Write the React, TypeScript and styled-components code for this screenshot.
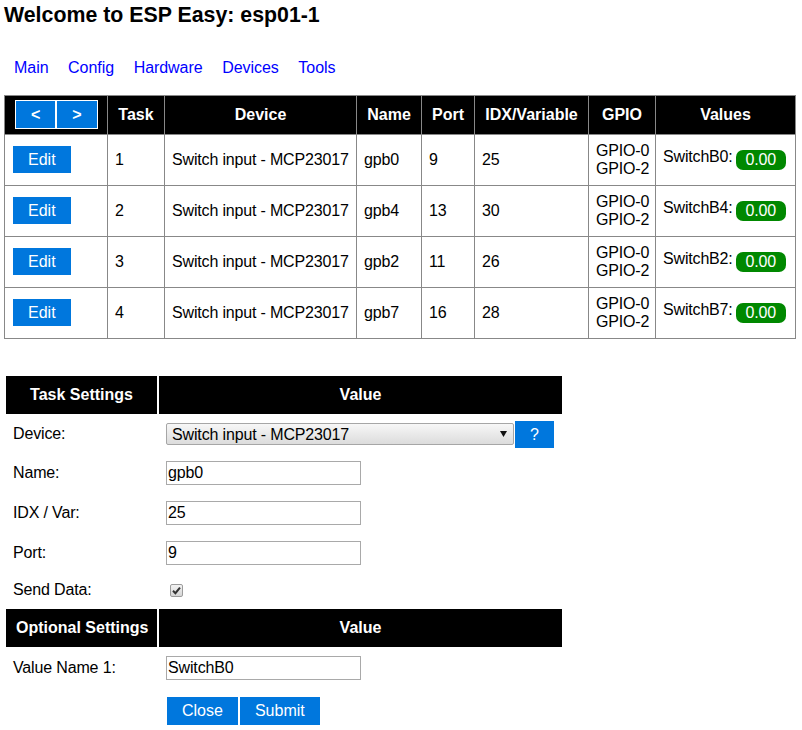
import React from 'react'
import styled, { createGlobalStyle } from 'styled-components'

const GlobalStyle = createGlobalStyle`
  html, body {
    overflow: hidden;
  }
  body {
    margin: 0;
    background: #fff;
    color: #000;
    font-family: "Liberation Sans", Arial, sans-serif;
    font-size: 16px;
  }
`

const Page = styled.div`
  padding: 3px 4px 0;
`

const Title = styled.h1`
  margin: 0;
  font-size: 21.33px;
  line-height: 24.5px;
  font-weight: bold;
`

const Menu = styled.nav`
  display: flex;
  gap: 19.6px;
  margin: 31px 0 0 10px;
  line-height: 18.4px;
  letter-spacing: -0.05px;
`

const MenuLink = styled.a`
  color: #0000ff;
  text-decoration: none;
`

const DeviceTable = styled.table`
  border-collapse: collapse;
  table-layout: fixed;
  width: 792px;
  margin-top: 18px;
`

const HeadCell = styled.th<{ $w?: number }>`
  ${p => (p.$w ? `width: ${p.$w}px;` : '')}
  padding: 10px;
  background: #000;
  color: #fff;
  font-weight: bold;
  text-align: center;
  white-space: nowrap;
  line-height: 18px;
  border: 1px solid #888;
`

const Cell = styled.td`
  padding: 7px;
  line-height: 18px;
  vertical-align: middle;
  border: 1px solid #888;
  white-space: nowrap;
  letter-spacing: -0.17px;
`

const LinkButton = styled.a`
  padding: 5px 15px;
  background: #0077dd;
  color: #fff;
  border: 1px solid #fff;
  text-decoration: none;
  font-weight: inherit;
  letter-spacing: 0;
`

const ValueBox = styled.div`
  display: flex;
  justify-content: space-between;
  align-items: flex-start;
`

const ValueName = styled.span`
  line-height: 18.4px;
`

const ValuePill = styled.span`
  margin: 2px;
  padding: 1px 10px;
  border-radius: 7px;
  background: #008800;
  color: #fff;
  line-height: 18px;
`

const SettingsTable = styled.table`
  border-collapse: separate;
  border-spacing: 2px;
  table-layout: fixed;
  width: 560px;
  margin-top: 35px;
`

const SettingsHead = styled.th<{ $w?: number }>`
  ${p => (p.$w ? `width: ${p.$w}px;` : '')}
  padding: 10px;
  background: #000;
  color: #fff;
  font-weight: bold;
  text-align: center;
  white-space: nowrap;
  line-height: 18.5px;
`

const SettingsCell = styled.td`
  padding: 7px;
  line-height: 18.4px;
  vertical-align: middle;
  white-space: nowrap;
  letter-spacing: -0.15px;
`

const FieldLine = styled.div`
  display: flex;
  align-items: center;
  height: 22px;
`

const SelectWrap = styled.div`
  position: relative;
  width: 348px;
  height: 22px;
`

const Select = styled.select`
  appearance: none;
  box-sizing: border-box;
  width: 100%;
  height: 22px;
  margin: 0;
  padding: 0 20px 0 5px;
  border: 1px solid #a6a6a6;
  border-radius: 2px;
  background: linear-gradient(#f7f7f7, #dcdcdc);
  color: #000;
  font-family: inherit;
  font-size: 16px;
  letter-spacing: -0.15px;
`

const SelectArrow = styled.svg`
  position: absolute;
  right: 7px;
  top: 8px;
  pointer-events: none;
`

const HelpButton = styled.a`
  display: inline-block;
  padding: 5px 15px;
  line-height: 17px;
  background: #0077dd;
  color: #fff;
  border: 1px solid #fff;
  text-decoration: none;
  letter-spacing: 0;
`

const TextInput = styled.input`
  box-sizing: border-box;
  width: 195px;
  height: 24px;
  margin: 0;
  padding: 1px;
  border: 1px solid #a9a9a9;
  font-family: inherit;
  font-size: 16px;
  color: #000;
  vertical-align: middle;
  letter-spacing: -0.15px;
`

const CheckLine = styled.div`
  display: flex;
  align-items: center;
  height: 18.4px;
`

const CheckBox = styled.span`
  box-sizing: border-box;
  display: flex;
  align-items: center;
  justify-content: center;
  width: 13px;
  height: 13px;
  margin: 0 0 0 4px;
  border: 1px solid #9c9c9c;
  border-radius: 2px;
  background: linear-gradient(#f2f2f2, #d6d6d6);
`

const ButtonRow = styled.div`
  display: flex;
`

const SubmitButton = styled.button`
  padding: 5px 15px;
  line-height: 18px;
  background: #0077dd;
  color: #fff;
  border: 1px solid #fff;
  border-radius: 0;
  font-family: inherit;
  font-size: 16px;
`

const menu = ['Main', 'Config', 'Hardware', 'Devices', 'Tools']

const tasks = [
  { task: 1, name: 'gpb0', port: 9, idx: 25, value: 'SwitchB0' },
  { task: 2, name: 'gpb4', port: 13, idx: 30, value: 'SwitchB4' },
  { task: 3, name: 'gpb2', port: 11, idx: 26, value: 'SwitchB2' },
  { task: 4, name: 'gpb7', port: 16, idx: 28, value: 'SwitchB7' }
]

const App: React.FC = () => {
  return (
    <Page>
      <GlobalStyle />
      <Title>Welcome to ESP Easy: esp01-1</Title>
      <Menu>
        {menu.map(m => (
          <MenuLink key={m} href="#">{m}</MenuLink>
        ))}
      </Menu>

      <DeviceTable>
        <thead>
          <tr>
            <HeadCell $w={82}>
              <LinkButton href="#">&lt;</LinkButton><LinkButton href="#">&gt;</LinkButton>
            </HeadCell>
            <HeadCell $w={36}>Task</HeadCell>
            <HeadCell $w={171}>Device</HeadCell>
            <HeadCell $w={44}>Name</HeadCell>
            <HeadCell $w={32}>Port</HeadCell>
            <HeadCell $w={93}>IDX/Variable</HeadCell>
            <HeadCell $w={46}>GPIO</HeadCell>
            <HeadCell>Values</HeadCell>
          </tr>
        </thead>
        <tbody>
          {tasks.map(t => (
            <tr key={t.task}>
              <Cell>
                <LinkButton href="#">Edit</LinkButton>
              </Cell>
              <Cell>{t.task}</Cell>
              <Cell>Switch input - MCP23017</Cell>
              <Cell>{t.name}</Cell>
              <Cell>{t.port}</Cell>
              <Cell>{t.idx}</Cell>
              <Cell>
                GPIO-0
                <br />
                GPIO-2
              </Cell>
              <Cell>
                <ValueBox>
                  <ValueName>{t.value}:</ValueName>
                  <ValuePill>0.00</ValuePill>
                </ValueBox>
              </Cell>
            </tr>
          ))}
        </tbody>
      </DeviceTable>

      <SettingsTable>
        <tbody>
          <tr>
            <SettingsHead $w={131}>Task Settings</SettingsHead>
            <SettingsHead>Value</SettingsHead>
          </tr>
          <tr>
            <SettingsCell>Device:</SettingsCell>
            <SettingsCell>
              <FieldLine>
                <SelectWrap>
                  <Select defaultValue="mcp">
                    <option value="mcp">Switch input - MCP23017</option>
                  </Select>
                  <SelectArrow width="7" height="6" viewBox="0 0 7 6">
                    <path d="M0 0 H7 L3.5 6 Z" fill="#111" />
                  </SelectArrow>
                </SelectWrap>
                <HelpButton href="#">?</HelpButton>
              </FieldLine>
            </SettingsCell>
          </tr>
          <tr>
            <SettingsCell>Name:</SettingsCell>
            <SettingsCell>
              <TextInput defaultValue="gpb0" />
            </SettingsCell>
          </tr>
          <tr>
            <SettingsCell>IDX / Var:</SettingsCell>
            <SettingsCell>
              <TextInput defaultValue="25" />
            </SettingsCell>
          </tr>
          <tr>
            <SettingsCell>Port:</SettingsCell>
            <SettingsCell>
              <TextInput defaultValue="9" />
            </SettingsCell>
          </tr>
          <tr>
            <SettingsCell>Send Data:</SettingsCell>
            <SettingsCell>
              <CheckLine>
                <CheckBox>
                  <svg width="9" height="9" viewBox="0 0 9 9">
                    <path d="M1 4.8 L3.4 7.2 L8 1.6" fill="none" stroke="#333" strokeWidth="2" />
                  </svg>
                </CheckBox>
              </CheckLine>
            </SettingsCell>
          </tr>
          <tr>
            <SettingsHead>Optional Settings</SettingsHead>
            <SettingsHead>Value</SettingsHead>
          </tr>
          <tr>
            <SettingsCell>Value Name 1:</SettingsCell>
            <SettingsCell>
              <TextInput defaultValue="SwitchB0" />
            </SettingsCell>
          </tr>
          <tr>
            <SettingsCell />
            <SettingsCell>
              <ButtonRow>
                <SubmitButton>Close</SubmitButton>
                <SubmitButton>Submit</SubmitButton>
              </ButtonRow>
            </SettingsCell>
          </tr>
        </tbody>
      </SettingsTable>
    </Page>
  )
}

export default App
